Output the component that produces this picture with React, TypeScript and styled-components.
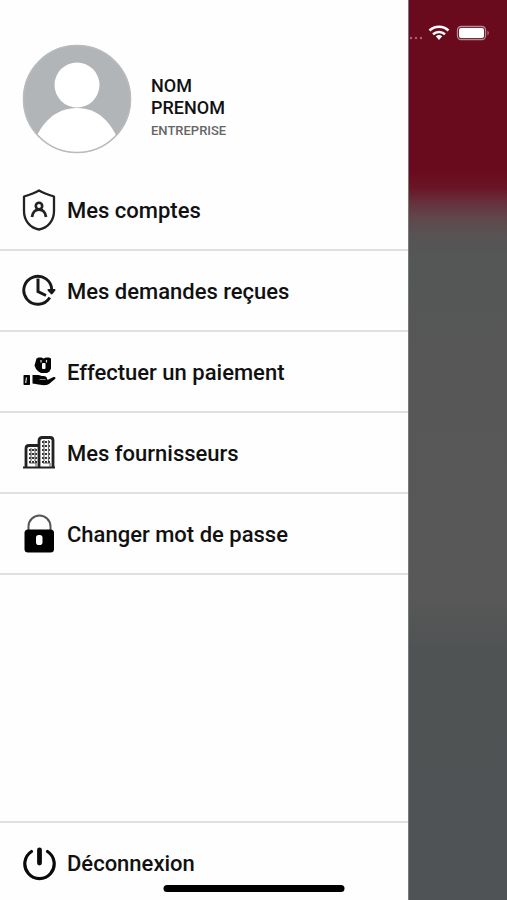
import React from "react";
import styled, { createGlobalStyle } from "styled-components";

const GlobalStyle = createGlobalStyle`
  *, *::before, *::after { box-sizing: border-box; }
  body {
    margin: 0;
    background: #fff;
    color: #111;
    font-family: Roboto, "Liberation Sans", sans-serif;
  }
`;

const Screen = styled.div`
  position: relative;
  display: grid;
  grid-template-columns: minmax(0, 1fr) 99px;
  min-height: 100vh;
`;

const Drawer = styled.aside`
  display: flex;
  flex-direction: column;
  background: #fefefe;
`;

const Profile = styled.header`
  display: flex;
  align-items: flex-start;
  gap: 19px;
  padding: 44px 22px 16px;
`;

const Avatar = styled.svg`
  flex: none;
  width: 110px;
  height: 110px;
`;

const Identity = styled.div`
  padding-top: 31px;
`;

const Name = styled.p`
  margin: 0;
  font-size: 18px;
  line-height: 22px;
  font-weight: 500;
`;

const Company = styled.p`
  margin: 0;
  font-size: 13px;
  line-height: 24px;
  font-weight: 500;
  color: #666;
`;

const Nav = styled.nav`
  flex: 1;
`;

const List = styled.ul`
  margin: 0;
  padding: 0;
  list-style: none;
`;

const Item = styled.li`
  border-bottom: 2px solid #e0e0e0;
`;

const MenuLink = styled.a`
  display: flex;
  align-items: center;
  gap: 11px;
  height: 79px;
  padding: 0 22px;
  color: inherit;
  font-size: 22px;
  line-height: 28px;
  font-weight: 500;
  text-decoration: none;
`;

const MenuLabel = styled.span`
  padding-top: 2px;
`;

const Glyph = styled.svg`
  flex: none;
  width: 34px;
  height: 42px;
`;

const Footer = styled.footer`
  padding-top: 4px;
  border-top: 2px solid #e0e0e0;
`;

const LogoutButton = styled.button`
  display: flex;
  align-items: center;
  gap: 11px;
  width: 100%;
  height: 73px;
  padding: 0 22px;
  border: 0;
  background: none;
  color: inherit;
  font: 500 22px/28px Roboto, "Liberation Sans", sans-serif;
  text-align: left;
`;

const Backdrop = styled.div`
  border-left: 1px solid #77797a;
  background: linear-gradient(
    #6a0b1d 0,
    #6a0b1d 172px,
    #6a1527 188px,
    #66303c 202px,
    #5f484c 218px,
    #585354 236px,
    #555656 255px,
    #575757 400px,
    #575857 600px,
    #505354 650px,
    #505355 100%
  );
`;

const StatusBar = styled.div`
  display: flex;
  justify-content: flex-end;
  align-items: center;
  padding: 24px 17px 0 0;
`;

const StatusIcons = styled.svg`
  flex: none;
  width: 81px;
  height: 18px;
`;

const HomeIndicator = styled.div`
  position: absolute;
  bottom: 8px;
  left: 50%;
  width: 181px;
  height: 7px;
  border-radius: 4px;
  background: #000;
  transform: translateX(-50%);
`;

const ShieldIcon = () => (
  <Glyph viewBox="0 0 34 42" fill="none" stroke="#222" strokeWidth="2.3" strokeLinejoin="round" aria-hidden="true">
    <path d="M17 1.500C12 4.500 7 6 2 7.500V22C2 31.500 8 39 17 40.500C26 39 32 31.500 32 22V7.500C27 6 22 4.500 17 1.500Z" />
    <circle cx="17" cy="17" r="3.200" strokeWidth="2.600" />
    <path d="M10 28C10.500 23.500 13.500 20.500 17 20.500S23.500 23.500 24 28" strokeWidth="2.800" />
  </Glyph>
);

const ClockIcon = () => (
  <Glyph viewBox="0 0 34 42" fill="none" stroke="#181818" aria-hidden="true">
    <path d="M27.800 27.500A14 14 0 1 1 29.800 20.500" strokeWidth="2.900" />
    <path d="M26.500 20H32.500L29.800 23.500Z" fill="#181818" strokeWidth="2" strokeLinejoin="round" />
    <path d="M16 8.500V21.500L24 25.500" strokeWidth="3" />
  </Glyph>
);

const PaymentIcon = () => (
  <Glyph viewBox="0 0 34 42" fill="#050505" aria-hidden="true">
    <path d="M14.500 7.500L16.500 6.500H19.500L21.500 7.500L24 6.500H27L29 7.500V17.500L27.500 20.500L25 22H19L16.500 20.500L14 18L12.500 14.500Z" />
    <path d="M19 9V11.500M24.500 9V11.500" fill="none" stroke="#ddd" strokeWidth="1.200" />
    <rect x="20" y="12" width="3.500" height="6" rx="1" fill="#fff" />
    <rect x="1.500" y="24" width="6.500" height="10" rx=".8" />
    <path d="M4.500 26.500L3.700 32" stroke="#ddd" strokeWidth="1.200" />
    <path d="M10.500 24H16C18 24.300 19 25 21 25C23.500 25.200 25.500 26 25 28.500H26.500L31.500 26C33.500 25.500 34 27 33 28L27 33C24.500 34.500 21 34.300 18 33.800L10.500 32.500Z" />
    <path d="M17.500 28.500H23.500" fill="none" stroke="#888" strokeWidth="1" />
  </Glyph>
);

const BuildingsIcon = () => (
  <Glyph viewBox="0 0 34 42" fill="none" stroke="#222" aria-hidden="true">
    <path d="M1 35.500H33" strokeWidth="2" />
    <path d="M4 35V16.500Q4 13.500 7 13.500H16M17 35V9Q17 5.500 20.500 5.500H28Q31 5.500 31 8.500V35" strokeWidth="2.800" />
    <path d="M7 18H15M7 22H15M7 26H15M7 30H15M20 10H29M20 14H29M20 18H29M20 22H29M20 26H29M20 30H29" stroke="#333" strokeWidth="1.900" strokeDasharray="2 1" />
    <path d="M9 16V29M13 16V29M22 8V29M26.500 8V29" stroke="#666" strokeWidth="1.200" />
    <path d="M7.500 31H14V35M21 31H28V35" strokeWidth="1" stroke="#555" />
  </Glyph>
);

const LockIcon = () => (
  <Glyph viewBox="0 0 34 42" aria-hidden="true">
    <path d="M6.500 18V13.500A11 11 0 0 1 28.500 13.500V18" fill="none" stroke="#555" strokeWidth="2" />
    <rect x="2.500" y="16.500" width="29.500" height="23" rx="3.500" fill="#000" />
    <rect x="14" y="22" width="6.500" height="10" rx="2.800" fill="#fff" />
  </Glyph>
);

const PowerIcon = () => (
  <Glyph viewBox="0 0 34 42" fill="none" stroke="#0a0a0a" strokeLinecap="round" aria-hidden="true">
    <path d="M9.500 8.500A14.700 14.700 0 1 0 25.500 8.500" strokeWidth="3.200" />
    <path d="M17.500 7V20" strokeWidth="4.800" />
  </Glyph>
);

const entries = [
  { label: "Mes comptes", href: "#comptes", Icon: ShieldIcon },
  { label: "Mes demandes reçues", href: "#demandes", Icon: ClockIcon },
  { label: "Effectuer un paiement", href: "#paiement", Icon: PaymentIcon },
  { label: "Mes fournisseurs", href: "#fournisseurs", Icon: BuildingsIcon },
  { label: "Changer mot de passe", href: "#mot-de-passe", Icon: LockIcon },
];

export default function App() {
  return (
    <>
      <GlobalStyle />
      <Screen>
        <Drawer>
          <Profile>
            <Avatar viewBox="0 0 110 110" aria-hidden="true">
              <defs>
                <clipPath id="avatar-clip">
                  <circle cx="55" cy="55" r="53.500" />
                </clipPath>
              </defs>
              <circle cx="55" cy="55" r="54" fill="#b2b5b7" />
              <g clipPath="url(#avatar-clip)" fill="#fff">
                <circle cx="55" cy="41" r="22.500" />
                <path d="M11 101C19 78 34 64 55 64S90 78 98 101L90 112H20Z" />
              </g>
              <circle cx="55" cy="55" r="53.500" fill="none" stroke="#b9bbbc" strokeWidth="1.500" />
            </Avatar>
            <Identity>
              <Name>NOM</Name>
              <Name>PRENOM</Name>
              <Company>ENTREPRISE</Company>
            </Identity>
          </Profile>
          <Nav>
            <List>
              {entries.map(({ label, href, Icon }) => (
                <Item key={href}>
                  <MenuLink href={href}>
                    <Icon />
                    <MenuLabel>{label}</MenuLabel>
                  </MenuLink>
                </Item>
              ))}
            </List>
          </Nav>
          <Footer>
            <LogoutButton type="button">
              <PowerIcon />
              Déconnexion
            </LogoutButton>
          </Footer>
        </Drawer>
        <Backdrop>
          <StatusBar>
            <StatusIcons viewBox="0 0 81 18" aria-hidden="true">
              <g fill="#a8646f">
                <circle cx="2" cy="14" r="1.200" />
                <circle cx="7" cy="14" r="1.200" />
                <circle cx="12" cy="14" r="1.200" />
              </g>
              <g fill="none" stroke="#fff" strokeWidth="2.500">
                <path d="M20.500 6.500A14 14 0 0 1 39.500 6.500" />
                <path d="M24 10.200A9 9 0 0 1 36 10.200" />
              </g>
              <path d="M26.800 12.300A5 5 0 0 1 33.200 12.300L30 16Z" fill="#fff" />
              <rect x="48.500" y="2.500" width="28" height="13" rx="3.500" fill="none" stroke="#b58a92" strokeWidth="1.300" />
              <rect x="50" y="4" width="25" height="10" rx="2" fill="#fff" />
              <path d="M78.500 6.500Q81 9 78.500 11.500Z" fill="#b58a92" />
            </StatusIcons>
          </StatusBar>
        </Backdrop>
        <HomeIndicator />
      </Screen>
    </>
  );
}
